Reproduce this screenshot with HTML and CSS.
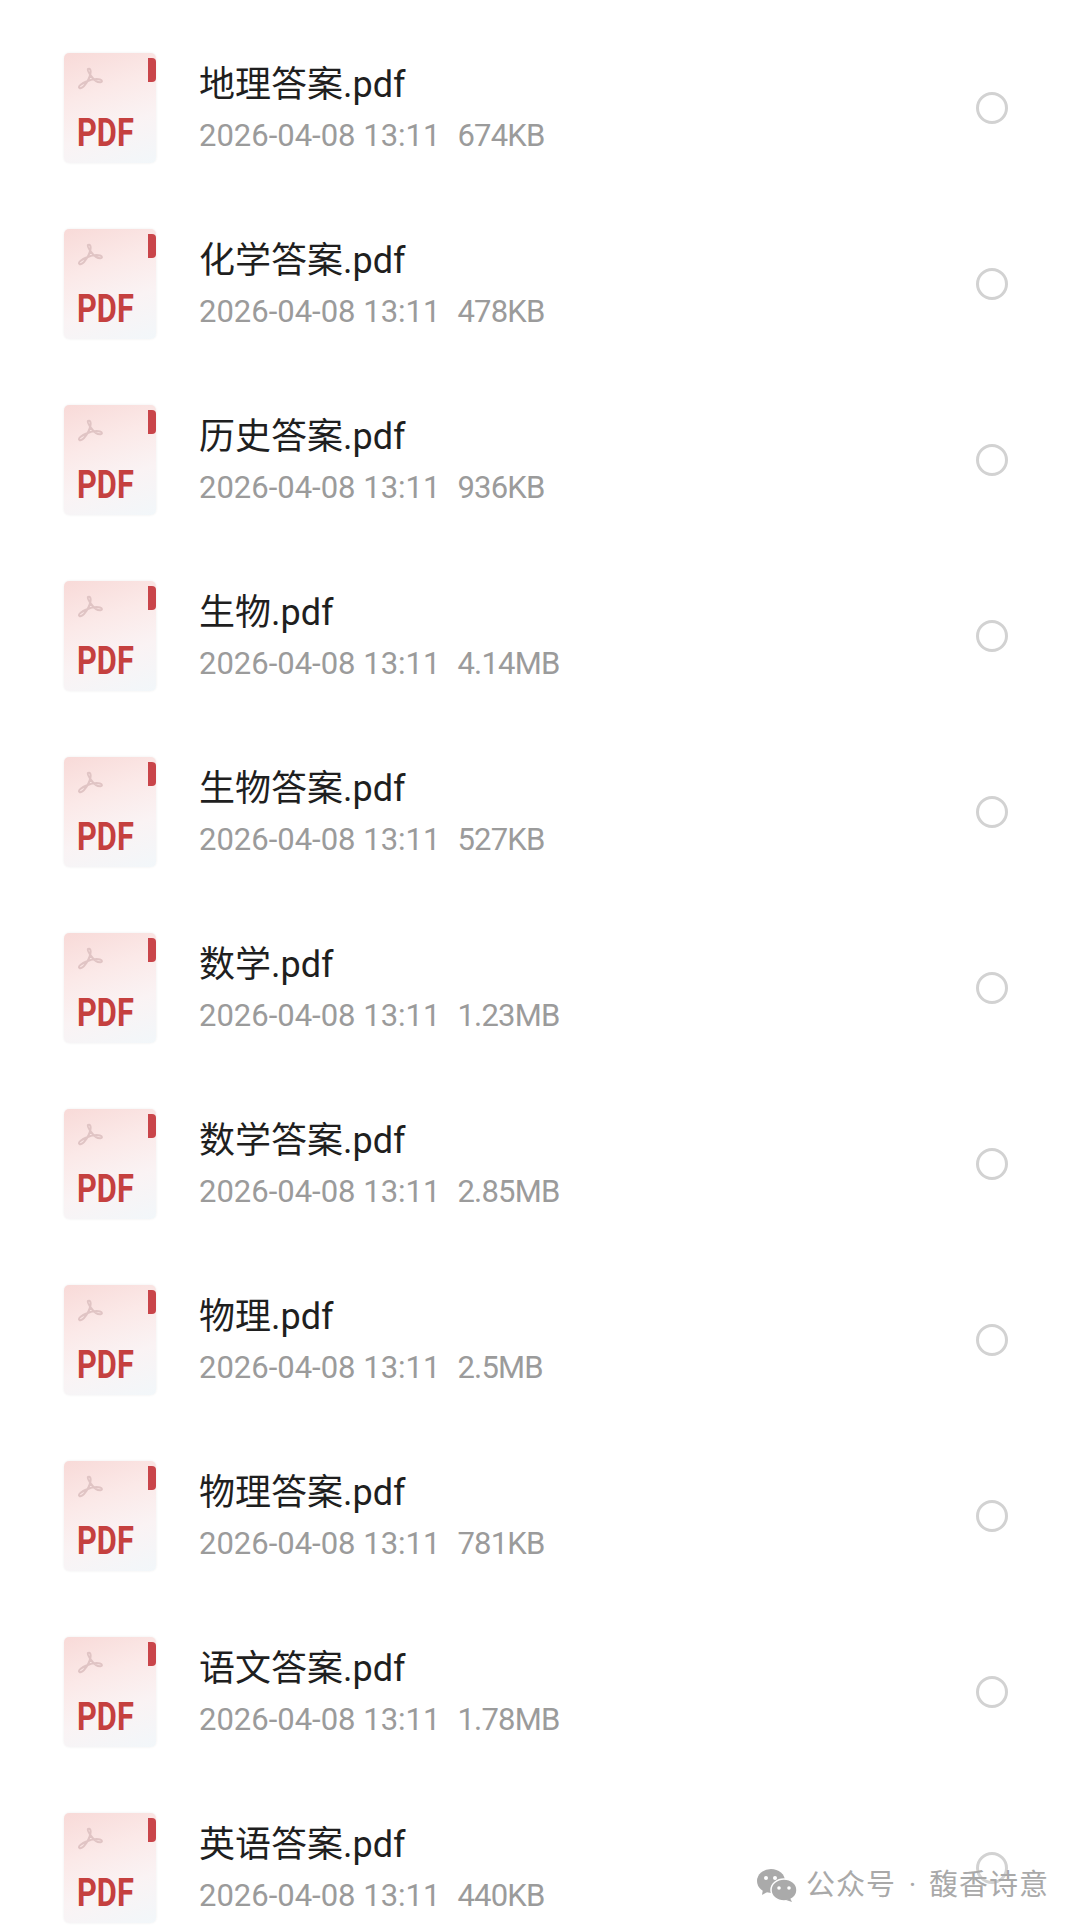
FILE: index.html
```html
<!DOCTYPE html>
<html lang="zh-CN">

<head>
    <meta charset="UTF-8">
    <meta name="viewport" content="width=device-width, initial-scale=1.0">
    <title>文件列表</title>
    <link rel="stylesheet" href="styles.css">
</head>

<body>
    <svg class="defs" width="0" height="0">
        <symbol id="acrobat" viewBox="0 0 26 26">
            <path d="M10 2c2-1 3 1 2.500 4-.5 3.500-3 9-6.500 13-2 2-4.500 3-5 1.500-.5-1.500 3-4 7.500-6 4.500-2 10-3 13.500-2 2.500.7 2.500 2.500.5 2.800-3 .3-7-3-9.500-6.500C11 6 9 3 10 2z" fill="none" stroke="#e0c4c4" stroke-width="2"/>
        </symbol>
    </svg>

    <ul class="file-list">
        <li class="file">
            <div class="pdf-icon"><i class="tab"></i><svg class="logo"><use href="#acrobat"/></svg><span class="pdf-label">PDF</span></div>
            <div class="info">
                <p class="name">地理答案.pdf</p>
                <p class="meta"><span>2026-04-08 13:11</span><span class="size">674KB</span></p>
            </div>
            <i class="radio"></i>
        </li>
        <li class="file">
            <div class="pdf-icon"><i class="tab"></i><svg class="logo"><use href="#acrobat"/></svg><span class="pdf-label">PDF</span></div>
            <div class="info">
                <p class="name">化学答案.pdf</p>
                <p class="meta"><span>2026-04-08 13:11</span><span class="size">478KB</span></p>
            </div>
            <i class="radio"></i>
        </li>
        <li class="file">
            <div class="pdf-icon"><i class="tab"></i><svg class="logo"><use href="#acrobat"/></svg><span class="pdf-label">PDF</span></div>
            <div class="info">
                <p class="name">历史答案.pdf</p>
                <p class="meta"><span>2026-04-08 13:11</span><span class="size">936KB</span></p>
            </div>
            <i class="radio"></i>
        </li>
        <li class="file">
            <div class="pdf-icon"><i class="tab"></i><svg class="logo"><use href="#acrobat"/></svg><span class="pdf-label">PDF</span></div>
            <div class="info">
                <p class="name">生物.pdf</p>
                <p class="meta"><span>2026-04-08 13:11</span><span class="size">4.14MB</span></p>
            </div>
            <i class="radio"></i>
        </li>
        <li class="file">
            <div class="pdf-icon"><i class="tab"></i><svg class="logo"><use href="#acrobat"/></svg><span class="pdf-label">PDF</span></div>
            <div class="info">
                <p class="name">生物答案.pdf</p>
                <p class="meta"><span>2026-04-08 13:11</span><span class="size">527KB</span></p>
            </div>
            <i class="radio"></i>
        </li>
        <li class="file">
            <div class="pdf-icon"><i class="tab"></i><svg class="logo"><use href="#acrobat"/></svg><span class="pdf-label">PDF</span></div>
            <div class="info">
                <p class="name">数学.pdf</p>
                <p class="meta"><span>2026-04-08 13:11</span><span class="size">1.23MB</span></p>
            </div>
            <i class="radio"></i>
        </li>
        <li class="file">
            <div class="pdf-icon"><i class="tab"></i><svg class="logo"><use href="#acrobat"/></svg><span class="pdf-label">PDF</span></div>
            <div class="info">
                <p class="name">数学答案.pdf</p>
                <p class="meta"><span>2026-04-08 13:11</span><span class="size">2.85MB</span></p>
            </div>
            <i class="radio"></i>
        </li>
        <li class="file">
            <div class="pdf-icon"><i class="tab"></i><svg class="logo"><use href="#acrobat"/></svg><span class="pdf-label">PDF</span></div>
            <div class="info">
                <p class="name">物理.pdf</p>
                <p class="meta"><span>2026-04-08 13:11</span><span class="size">2.5MB</span></p>
            </div>
            <i class="radio"></i>
        </li>
        <li class="file">
            <div class="pdf-icon"><i class="tab"></i><svg class="logo"><use href="#acrobat"/></svg><span class="pdf-label">PDF</span></div>
            <div class="info">
                <p class="name">物理答案.pdf</p>
                <p class="meta"><span>2026-04-08 13:11</span><span class="size">781KB</span></p>
            </div>
            <i class="radio"></i>
        </li>
        <li class="file">
            <div class="pdf-icon"><i class="tab"></i><svg class="logo"><use href="#acrobat"/></svg><span class="pdf-label">PDF</span></div>
            <div class="info">
                <p class="name">语文答案.pdf</p>
                <p class="meta"><span>2026-04-08 13:11</span><span class="size">1.78MB</span></p>
            </div>
            <i class="radio"></i>
        </li>
        <li class="file">
            <div class="pdf-icon"><i class="tab"></i><svg class="logo"><use href="#acrobat"/></svg><span class="pdf-label">PDF</span></div>
            <div class="info">
                <p class="name">英语答案.pdf</p>
                <p class="meta"><span>2026-04-08 13:11</span><span class="size">440KB</span></p>
            </div>
            <i class="radio"></i>
        </li>
    </ul>

    <!-- 水印 -->
    <div class="watermark">
        <svg class="wechat" viewBox="0 0 40 33">
            <ellipse cx="14" cy="12" rx="14" ry="12" fill="#aaa"/>
            <path d="M6 20l-1 6 7-4z" fill="#aaa"/>
            <ellipse cx="27" cy="21" rx="13" ry="11" fill="#aaa" stroke="#fff" stroke-width="1.500"/>
            <path d="M33 29l2 4-6-2z" fill="#aaa"/>
            <circle cx="9" cy="9" r="2" fill="#fff"/>
            <circle cx="18" cy="9" r="2" fill="#fff"/>
            <circle cx="22" cy="19" r="1.800" fill="#fff"/>
            <circle cx="32" cy="19" r="1.800" fill="#fff"/>
        </svg>
        <span class="mark-name">公众号</span>
        <span class="mark-dot">·</span>
        <span class="mark-name">馥香诗意</span>
    </div>
</body>

</html>
```

FILE: styles.css
```css
body {
    margin: 0;
    height: 1926px;
    overflow: hidden;
    position: relative;
    background: #fff;
    font-family: Roboto, "Noto Sans CJK SC", sans-serif;
}

.defs {
    position: absolute;
}

.file-list {
    list-style: none;
    margin: 0;
    padding: 20px 0 0 64px;
}

.file {
    display: flex;
    align-items: center;
    height: 176px;
}

.pdf-icon {
    position: relative;
    width: 92px;
    height: 110px;
    flex-shrink: 0;
    border-radius: 5px;
    background: linear-gradient(160deg, #f8dad8 0%, #fbe9e8 35%, #faf3f4 65%, #f2f7fa 100%);
    box-shadow: 0 0 2px rgba(120, 120, 120, 0.15);
}

.tab {
    position: absolute;
    top: 5px;
    right: 0;
    width: 8px;
    height: 24px;
    border-radius: 0 4px 4px 0;
    background: #c9454a;
}

.logo {
    position: absolute;
    left: 14px;
    top: 14px;
    width: 26px;
    height: 26px;
}

.pdf-label {
    position: absolute;
    left: 13px;
    top: 58px;
    font-size: 39px;
    line-height: 44px;
    font-weight: 700;
    color: #c5403f;
    transform: scaleX(0.79);
    transform-origin: left center;
}

.info {
    flex: 1;
    margin-left: 43px;
}

.name {
    margin: 0;
    font-size: 36px;
    line-height: 48px;
    color: #1f1f1f;
}

.meta {
    display: flex;
    gap: 17px;
    margin: 7px 0 0;
    font-size: 31px;
    line-height: 40px;
    color: #9b9b9b;
}

.size {
    letter-spacing: -0.8px;
}

.radio {
    width: 32px;
    height: 32px;
    box-sizing: border-box;
    border: 3px solid #d2d2d2;
    border-radius: 50%;
    margin-right: 72px;
}

.watermark {
    position: absolute;
    left: 757px;
    top: 1867px;
    display: flex;
    align-items: center;
    font-size: 29px;
    line-height: 36px;
    color: #a9a9a9;
    white-space: nowrap;
}

.wechat {
    width: 40px;
    height: 33px;
    margin-right: 9px;
}

.mark-name {
    letter-spacing: 1px;
}

.mark-dot {
    width: 33px;
    text-align: center;
}
```
